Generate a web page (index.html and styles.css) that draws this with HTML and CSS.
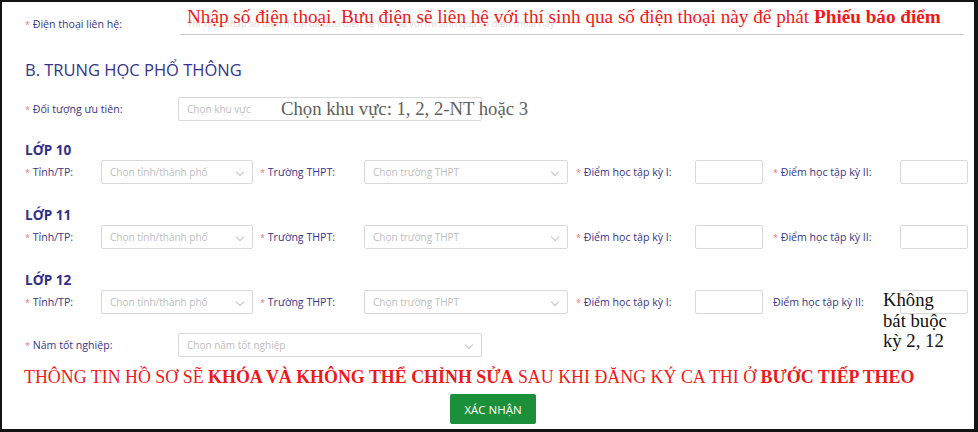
FILE: index.html
```html
<!DOCTYPE html>
<html lang="vi">
<head>
<meta charset="utf-8">
<title>Form</title>
<link rel="stylesheet" href="styles.css">
</head>
<body>
<div class="frame">
  <div class="row row-phone">
    <label class="lbl lbl-wide"><span class="req">*</span> Điện thoại liên hệ:</label>
    <div class="line-input">
      <span class="ph">Thí sinh nhập số điện thoại để bưu điện sẽ liên hệ với thí sinh qua số điện thoại này</span>
      <span class="note note-red">Nhập số điện thoại. Bưu điện sẽ liên hệ với thí sinh qua số điện thoại này để phát <b>Phiếu báo điểm</b></span>
    </div>
  </div>

  <h2 class="section-title">B. TRUNG HỌC PHỔ THÔNG</h2>

  <div class="row row-doi">
    <label class="lbl lbl-wide"><span class="req">*</span> Đối tượng ưu tiên:</label>
    <div class="box box-wide">
      <span class="ph">Chọn khu vực</span>
      <span class="note note-gray">Chọn khu vực: 1, 2, 2-NT hoặc 3</span>
    </div>
  </div>

  <div class="grade">
    <h3 class="grade-title">LỚP 10</h3>
    <div class="row grade-row">
      <label class="lbl lbl-tinh"><span class="req">*</span> Tỉnh/TP:</label>
      <div class="box sel sel-tinh"><span class="ph">Chọn tỉnh/thành phố</span><span class="chev"></span></div>
      <label class="lbl lbl-truong"><span class="req">*</span> Trường THPT:</label>
      <div class="box sel sel-truong"><span class="ph">Chọn trường THPT</span><span class="chev"></span></div>
      <label class="lbl lbl-d1"><span class="req">*</span> Điểm học tập kỳ I:</label>
      <div class="box score"></div>
      <label class="lbl lbl-d2"><span class="req">*</span> Điểm học tập kỳ II:</label>
      <div class="box score"></div>
    </div>
  </div>

  <div class="grade">
    <h3 class="grade-title">LỚP 11</h3>
    <div class="row grade-row">
      <label class="lbl lbl-tinh"><span class="req">*</span> Tỉnh/TP:</label>
      <div class="box sel sel-tinh"><span class="ph">Chọn tỉnh/thành phố</span><span class="chev"></span></div>
      <label class="lbl lbl-truong"><span class="req">*</span> Trường THPT:</label>
      <div class="box sel sel-truong"><span class="ph">Chọn trường THPT</span><span class="chev"></span></div>
      <label class="lbl lbl-d1"><span class="req">*</span> Điểm học tập kỳ I:</label>
      <div class="box score"></div>
      <label class="lbl lbl-d2"><span class="req">*</span> Điểm học tập kỳ II:</label>
      <div class="box score"></div>
    </div>
  </div>

  <div class="grade">
    <h3 class="grade-title">LỚP 12</h3>
    <div class="row grade-row">
      <label class="lbl lbl-tinh"><span class="req">*</span> Tỉnh/TP:</label>
      <div class="box sel sel-tinh"><span class="ph">Chọn tỉnh/thành phố</span><span class="chev"></span></div>
      <label class="lbl lbl-truong"><span class="req">*</span> Trường THPT:</label>
      <div class="box sel sel-truong"><span class="ph">Chọn trường THPT</span><span class="chev"></span></div>
      <label class="lbl lbl-d1"><span class="req">*</span> Điểm học tập kỳ I:</label>
      <div class="box score"></div>
      <label class="lbl lbl-d2">Điểm học tập kỳ II:</label>
      <div class="box score score-note">
        <span class="note note-black">Không<br>bát buộc<br>kỳ 2, 12</span>
      </div>
    </div>
  </div>

  <div class="row row-nam">
    <label class="lbl lbl-wide"><span class="req">*</span> Năm tốt nghiệp:</label>
    <div class="box box-wide sel"><span class="ph">Chọn năm tốt nghiệp</span><span class="chev"></span></div>
  </div>

  <p class="warning">THÔNG TIN HỒ SƠ SẼ <b>KHÓA VÀ KHÔNG THỂ CHỈNH SỬA</b> SAU KHI ĐĂNG KÝ CA THI Ở <b>BƯỚC TIẾP THEO</b></p>

  <div class="actions">
    <button class="btn">XÁC NHẬN</button>
  </div>
</div>
</body>
</html>
```

FILE: styles.css
```css
* { box-sizing: border-box; }

html, body {
  margin: 0;
  padding: 0;
  background: #111;
}

.frame {
  width: 978px;
  height: 432px;
  background: #fff;
  border-style: solid;
  border-color: #141414;
  border-width: 2px 4px 3px 2px;
  padding: 0 0 0 23px;
  overflow: hidden;
  font-family: "Open Sans", "Noto Sans", sans-serif;
}

.row {
  display: flex;
  align-items: center;
}

.lbl {
  font-size: 10.6px;
  color: #36368a;
  white-space: nowrap;
  flex: none;
}

.req {
  color: #f0707f;
  font-size: 9px;
}

.lbl-wide { width: 153px; }

.row-phone {
  margin-top: 10px;
  height: 23px;
}

.line-input {
  position: relative;
  width: 784px;
  height: 23px;
  border-bottom: 1px solid #c8c8c8;
  margin-left: 2px;
  display: flex;
  align-items: center;
  padding-left: 7px;
}

.ph {
  font-size: 10px;
  color: #bdbdbd;
  white-space: nowrap;
}

.line-input .ph { color: #dadada; font-size: 9.5px; }

.note {
  position: absolute;
  font-family: "Liberation Serif", "Times New Roman", serif;
  white-space: nowrap;
  font-size: 18.7px;
  line-height: 21px;
}

.note-red {
  color: #f01818;
  left: 7px;
  top: -6px;
  font-size: 19.2px;
}

.section-title {
  margin: 23px 0 0 0;
  height: 24px;
  line-height: 24px;
  font-size: 16.5px;
  font-weight: 500;
  color: #34348c;
}

.row-doi {
  margin-top: 15px;
  height: 24px;
}

.box {
  position: relative;
  height: 24px;
  border: 1px solid #d9d9d9;
  border-radius: 2px;
  background: #fff;
  display: flex;
  align-items: center;
  padding-left: 8px;
  flex: none;
}

.box-wide { width: 304px; }

.note-gray {
  color: #606060;
  left: 102px;
  top: 0px;
}

.sel .chev {
  position: absolute;
  right: 9px;
  top: 8px;
  width: 6px;
  height: 6px;
  border-right: 1px solid #c4c4c4;
  border-bottom: 1px solid #c4c4c4;
  transform: rotate(45deg);
}

.grade { margin-top: 19px; }
.grade + .grade { margin-top: 21px; }

.grade-title {
  margin: 0;
  height: 20px;
  line-height: 20px;
  font-size: 13.5px;
  font-weight: 700;
  color: #2f2f86;
}

.grade-row { height: 24px; }

.lbl-tinh { width: 76px; }
.sel-tinh { width: 152px; }
.lbl-truong { width: 104px; margin-left: 7px; }
.sel-truong { width: 204px; }
.lbl-d1 { width: 119px; margin-left: 8px; }
.score { width: 68px; }
.lbl-d2 { width: 127px; margin-left: 10px; }

.score-note { overflow: visible; }

.note-black {
  color: #111;
  left: -18px;
  top: -1px;
  line-height: 20.5px;
}

.row-nam {
  margin-top: 19px;
  height: 24px;
}

.warning {
  margin: 10px 0 0 -1px;
  height: 21px;
  line-height: 21px;
  font-family: "Liberation Serif", "Times New Roman", serif;
  font-size: 17.9px;
  color: #f01818;
  white-space: nowrap;
}

.actions {
  margin-top: 6px;
  padding-left: 425px;
}

.btn {
  width: 86px;
  height: 30px;
  border: 0;
  border-radius: 2px;
  background: #1c8f3b;
  color: #fff;
  font-family: "Open Sans", "Noto Sans", sans-serif;
  font-size: 11.5px;
  padding: 0;
}
```
